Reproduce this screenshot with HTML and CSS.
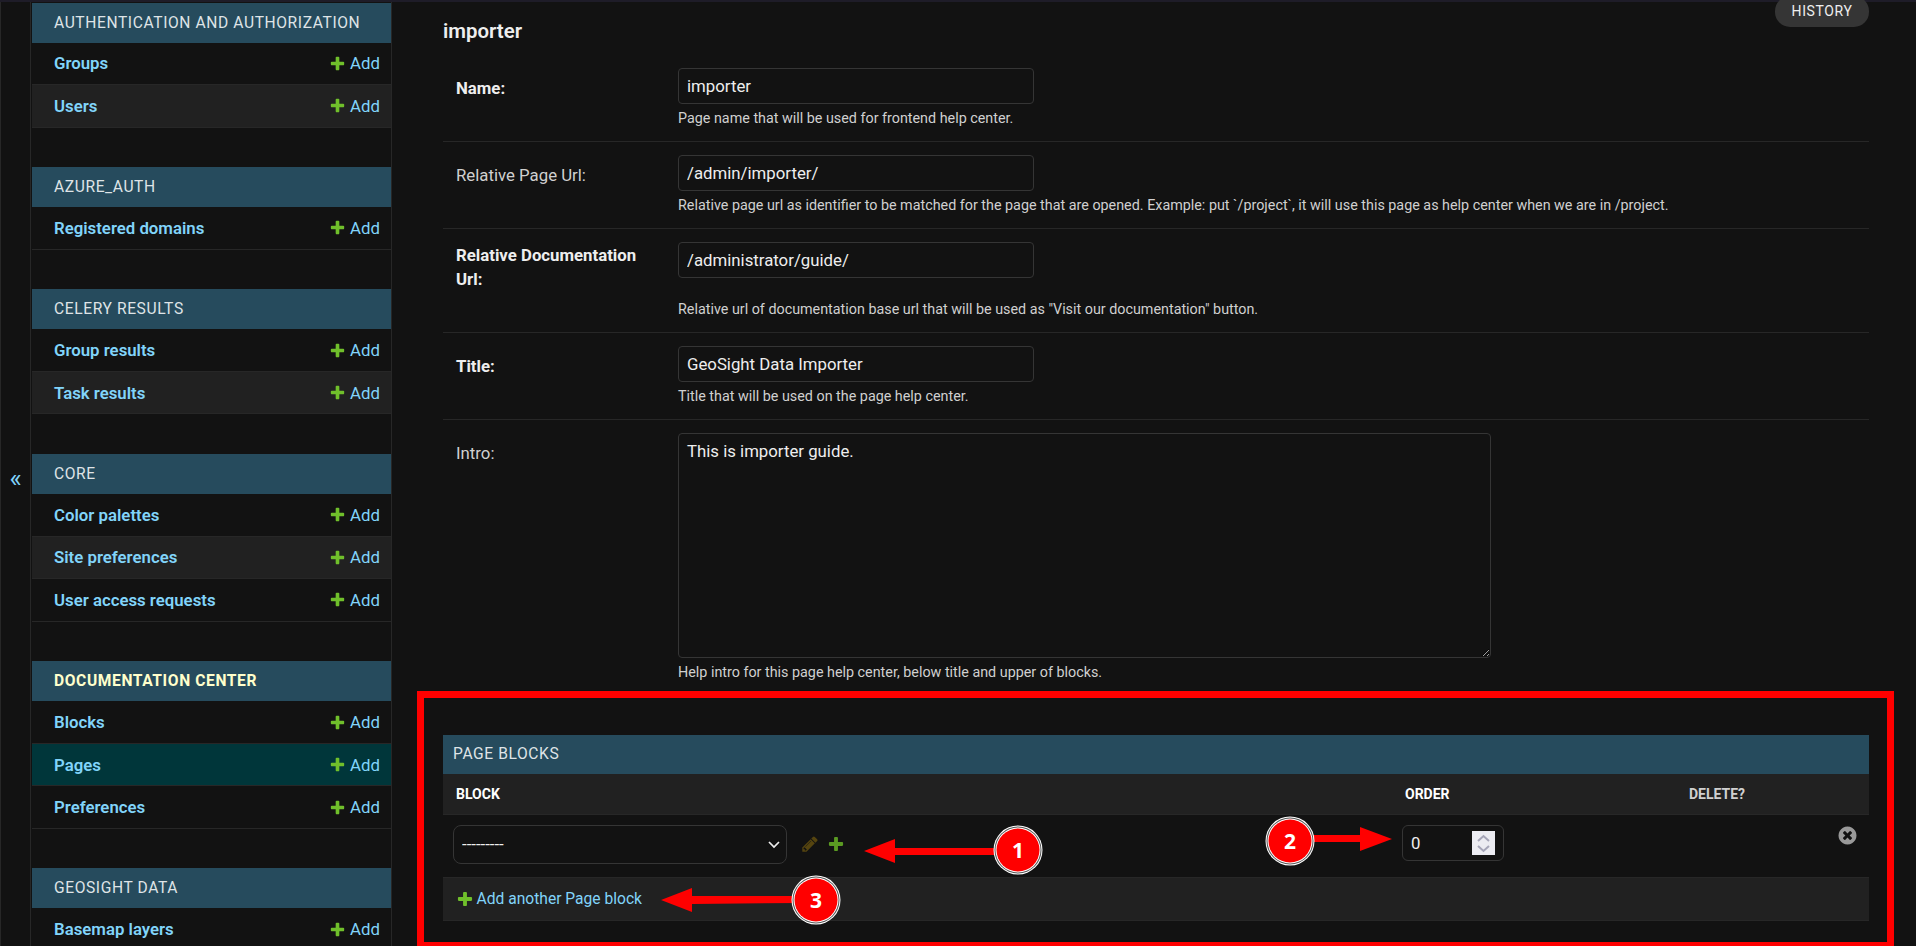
FILE: index.html
```html
<!DOCTYPE html>
<html lang="en">
<head>
  <meta charset="UTF-8">
  <meta name="viewport" content="width=device-width, initial-scale=1.0">
  <title>importer | Change page</title>
  <link rel="stylesheet" href="styles.css">
</head>
<body>

  <svg class="icon-defs" aria-hidden="true">
    <symbol id="icon-add" viewBox="0 0 1792 1792">
      <path d="M1600 796v192q0 40-28 68t-68 28h-416v416q0 40-28 68t-68 28h-192q-40 0-68-28t-28-68v-416h-416q-40 0-68-28t-28-68v-192q0-40 28-68t68-28h416v-416q0-40 28-68t68-28h192q40 0 68 28t28 68v416h416q40 0 68 28t28 68z"/>
    </symbol>
    <symbol id="icon-change" viewBox="0 0 1792 1792">
      <path d="M491 1536l91-91-235-235-91 91v107h128v128h107zm523-928q0-22-22-22-10 0-17 7l-542 542q-7 7-7 17 0 22 22 22 10 0 17-7l542-542q7-7 7-17zm-54-192l416 416-832 832h-416v-416zm683 96q0 53-37 90l-166 166-416-416 166-165q36-38 90-38 53 0 91 38l235 234q37 39 37 91z"/>
    </symbol>
    <symbol id="icon-delete" viewBox="0 0 1792 1792">
      <path d="M1277 1122q0-26-19-45l-181-181 181-181q19-19 19-45 0-27-19-46l-90-90q-19-19-46-19-26 0-45 19l-181 181-181-181q-19-19-45-19-27 0-46 19l-90 90q-19 19-19 46 0 26 19 45l181 181-181 181q-19 19-19 45 0 27 19 46l90 90q19 19 46 19 26 0 45-19l181-181 181 181q19 19 45 19 27 0 46-19l90-90q19-19 19-46zm387-226q0 209-103 385.5t-279.5 279.5-385.5 103-385.5-103-279.5-279.5-103-385.5 103-385.5 279.5-279.5 385.5-103 385.5 103 279.5 279.5 103 385.5z"/>
    </symbol>
  </svg>

  <div class="topline"></div>

  <div class="shell">
    <button class="nav-toggle" type="button">«</button>

    <nav class="sidebar">
      <div class="app-module">
        <div class="app-caption">Authentication and Authorization</div>
        <div class="model-row"><a class="model-link">Groups</a><a class="add-link"><svg class="icon-plus"><use href="#icon-add"/></svg>Add</a></div>
        <div class="model-row alt"><a class="model-link">Users</a><a class="add-link"><svg class="icon-plus"><use href="#icon-add"/></svg>Add</a></div>
      </div>
      <div class="app-module">
        <div class="app-caption">Azure_Auth</div>
        <div class="model-row"><a class="model-link">Registered domains</a><a class="add-link"><svg class="icon-plus"><use href="#icon-add"/></svg>Add</a></div>
      </div>
      <div class="app-module">
        <div class="app-caption">Celery Results</div>
        <div class="model-row"><a class="model-link">Group results</a><a class="add-link"><svg class="icon-plus"><use href="#icon-add"/></svg>Add</a></div>
        <div class="model-row alt"><a class="model-link">Task results</a><a class="add-link"><svg class="icon-plus"><use href="#icon-add"/></svg>Add</a></div>
      </div>
      <div class="app-module">
        <div class="app-caption">Core</div>
        <div class="model-row"><a class="model-link">Color palettes</a><a class="add-link"><svg class="icon-plus"><use href="#icon-add"/></svg>Add</a></div>
        <div class="model-row alt"><a class="model-link">Site preferences</a><a class="add-link"><svg class="icon-plus"><use href="#icon-add"/></svg>Add</a></div>
        <div class="model-row"><a class="model-link">User access requests</a><a class="add-link"><svg class="icon-plus"><use href="#icon-add"/></svg>Add</a></div>
      </div>
      <div class="app-module">
        <div class="app-caption current">Documentation Center</div>
        <div class="model-row"><a class="model-link">Blocks</a><a class="add-link"><svg class="icon-plus"><use href="#icon-add"/></svg>Add</a></div>
        <div class="model-row selected"><a class="model-link">Pages</a><a class="add-link"><svg class="icon-plus"><use href="#icon-add"/></svg>Add</a></div>
        <div class="model-row"><a class="model-link">Preferences</a><a class="add-link"><svg class="icon-plus"><use href="#icon-add"/></svg>Add</a></div>
      </div>
      <div class="app-module">
        <div class="app-caption">GeoSight Data</div>
        <div class="model-row"><a class="model-link">Basemap layers</a><a class="add-link"><svg class="icon-plus"><use href="#icon-add"/></svg>Add</a></div>
      </div>
    </nav>

    <main class="content">
      <div class="page-head">
        <h2 class="page-title">importer</h2>
        <a class="history-btn">History</a>
      </div>

      <div class="form-row">
        <label class="field-label required">Name:</label>
        <input class="text-input" type="text" value="importer">
        <div class="help">Page name that will be used for frontend help center.</div>
      </div>
      <div class="form-row">
        <label class="field-label">Relative Page Url:</label>
        <input class="text-input" type="text" value="/admin/importer/">
        <div class="help">Relative page url as identifier to be matched for the page that are opened. Example: put `/project`, it will use this page as help center when we are in /project.</div>
      </div>
      <div class="form-row">
        <label class="field-label required tall">Relative Documentation Url:</label>
        <input class="text-input" type="text" value="/administrator/guide/">
        <div class="help">Relative url of documentation base url that will be used as "Visit our documentation" button.</div>
      </div>
      <div class="form-row">
        <label class="field-label required">Title:</label>
        <input class="text-input" type="text" value="GeoSight Data Importer">
        <div class="help">Title that will be used on the page help center.</div>
      </div>
      <div class="form-row last">
        <label class="field-label">Intro:</label>
        <textarea class="text-area">This is importer guide.</textarea>
        <div class="help">Help intro for this page help center, below title and upper of blocks.</div>
      </div>

      <div class="inline-group">
        <div class="inline-caption">Page blocks</div>
        <table class="inline-table">
          <colgroup>
            <col class="col-block">
            <col class="col-order">
            <col>
          </colgroup>
          <thead>
            <tr>
              <th>Block</th>
              <th>Order</th>
              <th class="quiet">Delete?</th>
            </tr>
          </thead>
          <tbody>
            <tr>
              <td>
                <div class="block-cell">
                  <div class="select-wrap">
                    <select class="block-select"><option>---------</option></select>
                    <svg class="select-arrow" viewBox="0 0 12 8" width="12" height="8"><path d="M1 1l5 5 5-5" fill="none" stroke="#eeeeee" stroke-width="1.7"/></svg>
                  </div>
                  <svg class="icon-pencil"><use href="#icon-change"/></svg>
                  <svg class="icon-plus dim"><use href="#icon-add"/></svg>
                </div>
              </td>
              <td>
                <div class="number-input">
                  <input type="text" value="0">
                  <span class="spinner">
                    <svg viewBox="0 0 23 24" width="23" height="24"><path d="M6 10l5.500-5 5.500 5M6 15l5.500 5 5.500-5" fill="none" stroke="#a5a5b8" stroke-width="2"/></svg>
                  </span>
                </div>
              </td>
              <td class="delete-cell"><svg class="icon-delete"><use href="#icon-delete"/></svg></td>
            </tr>
          </tbody>
        </table>
        <div class="add-row"><svg class="icon-plus"><use href="#icon-add"/></svg><a>Add another Page block</a></div>
      </div>
    </main>
  </div>

  <!-- annotations drawn on top of the screenshot -->
  <svg class="annotations" viewBox="0 0 1916 946" width="1916" height="946">
    <rect x="420.5" y="694.5" width="1470" height="251" fill="none" stroke="#ff0000" stroke-width="7"/>

    <path d="M864 851L895 839V848L1000 848V855L895 855V863Z" fill="#ff0000"/>
    <path d="M1310 835H1360V827L1392 839L1360 851V842H1310Z" fill="#ff0000"/>
    <path d="M661 900L692 888V896L800 896V903L692 904V912Z" fill="#ff0000"/>

    <g class="badge">
      <circle cx="1018" cy="850" r="24.500" fill="#ffffff"/>
      <circle cx="1018" cy="850" r="23.500" fill="#555555"/>
      <circle cx="1018" cy="850" r="22.500" fill="#ffffff"/>
      <circle cx="1018" cy="850" r="21.500" fill="#ff0000"/>
      <text x="1018" y="858">1</text>
    </g>
    <g class="badge">
      <circle cx="1290" cy="841" r="24.500" fill="#ffffff"/>
      <circle cx="1290" cy="841" r="23.500" fill="#555555"/>
      <circle cx="1290" cy="841" r="22.500" fill="#ffffff"/>
      <circle cx="1290" cy="841" r="21.500" fill="#ff0000"/>
      <text x="1290" y="849">2</text>
    </g>
    <g class="badge">
      <circle cx="816" cy="900" r="24.500" fill="#ffffff"/>
      <circle cx="816" cy="900" r="23.500" fill="#555555"/>
      <circle cx="816" cy="900" r="22.500" fill="#ffffff"/>
      <circle cx="816" cy="900" r="21.500" fill="#ff0000"/>
      <text x="816" y="908">3</text>
    </g>
  </svg>

</body>
</html>
```

FILE: styles.css
```css
* {
  box-sizing: border-box;
}

html, body {
  height: 100%;
}

body {
  margin: 0;
  position: relative;
  overflow: hidden;
  background-color: #121212;
  color: #eeeeee;
  font-family: Roboto, "Liberation Sans", sans-serif;
  font-size: 16.8px;
  color-scheme: dark;
}

.icon-defs {
  display: none;
}

.topline {
  height: 2px;
  background-color: #1e1c28;
}

.shell {
  display: flex;
  height: calc(100% - 2px);
}

/* sidebar */
.nav-toggle {
  width: 31px;
  flex: none;
  padding: 8px 0 0;
  background-color: #121212;
  border: none;
  border-left: 1px solid #272727;
  border-right: 1px solid #272727;
  color: #81d4fa;
  font-family: Roboto, sans-serif;
  font-size: 26px;
}

.sidebar {
  width: 361px;
  flex: none;
  padding: 0.5px 0 0 1px;
  border-right: 1px solid #272727;
  overflow: hidden;
}

.app-module {
  margin-bottom: 39.700px;
}

.app-caption {
  height: 40px;
  padding-left: 22px;
  line-height: 40px;
  background-color: #264b5d;
  color: #dfe4e7;
  font-size: 15.6px;
  letter-spacing: 0.6px;
  text-transform: uppercase;
}

.app-caption.current {
  color: #ffffcc;
  font-weight: 700;
}

.model-row {
  display: flex;
  align-items: center;
  justify-content: space-between;
  height: 42.500px;
  padding: 0 11px 0 22px;
  border-bottom: 1px solid #272727;
}

.model-row.alt {
  background-color: #212121;
}

.model-row.selected {
  background-color: #00363a;
}

.model-link {
  color: #81d4fa;
  font-weight: 600;
}

.add-link {
  display: flex;
  align-items: center;
  gap: 4px;
  color: #81d4fa;
}

.icon-plus {
  width: 17px;
  height: 17px;
  fill: #70bf2b;
}

.icon-plus.dim {
  width: 18px;
  height: 18px;
  fill: #5a9a22;
}

/* change form */
.content {
  flex: 1;
  min-width: 0;
  padding: 0 47px 0 51px;
}

.page-head {
  display: flex;
  justify-content: space-between;
  align-items: flex-start;
  height: 53px;
}

.page-title {
  margin: 17px 0 0;
  font-size: 20.4px;
  font-weight: 600;
  line-height: 24px;
  color: #eeeeee;
}

.history-btn {
  width: 94px;
  height: 31px;
  margin-top: -6px;
  padding-top: 3px;
  border-radius: 15px;
  background-color: #353535;
  color: #eeeeee;
  font-size: 14px;
  letter-spacing: 0.6px;
  line-height: 24px;
  text-align: center;
  text-transform: uppercase;
}

.form-row {
  display: grid;
  grid-template-columns: 222px 1fr;
  padding: 13px 0 15px 13px;
  border-bottom: 1px solid #272727;
}

.form-row.last {
  border-bottom: none;
}

.field-label {
  padding: 8px 30px 0 0;
  line-height: 24px;
  color: #d0d0d0;
}

.field-label.required {
  color: #eeeeee;
  font-weight: 700;
}

.field-label.tall {
  padding: 1px 30px 4px 0;
}

.text-input {
  width: 356px;
  height: 36px;
  padding: 0 8px;
  background-color: #121212;
  border: 1px solid #353535;
  border-radius: 4px;
  color: #eeeeee;
  font-family: inherit;
  font-size: 16.8px;
}

.text-area {
  display: block;
  width: 813px;
  height: 225px;
  padding: 5px 8px;
  background-color: #121212;
  border: 1px solid #353535;
  border-radius: 4px;
  color: #eeeeee;
  font-family: inherit;
  font-size: 16.8px;
  line-height: 24px;
}

.help {
  grid-column: 2;
  margin-top: 6px;
  color: #d0d0d0;
  font-size: 14.33px;
  line-height: 16px;
}

/* inline group */
.inline-group {
  margin-top: 40px;
}

.inline-caption {
  height: 39px;
  padding-left: 10px;
  line-height: 38px;
  background-color: #264b5d;
  color: #dfe4e7;
  font-size: 15.6px;
  letter-spacing: 0.6px;
  text-transform: uppercase;
}

.inline-table {
  width: 100%;
  border-collapse: collapse;
  table-layout: fixed;
}

.col-block {
  width: 949px;
}

.col-order {
  width: 284px;
}

.inline-table th {
  height: 40px;
  padding: 0 13px;
  background-color: #212121;
  border-bottom: 1px solid #272727;
  color: #ffffff;
  font-size: 14px;
  font-weight: 700;
  text-align: left;
  text-transform: uppercase;
}

.inline-table th.quiet {
  color: #d0d0d0;
}

.inline-table td {
  height: 63px;
  padding: 10px 10px 0;
  vertical-align: top;
}

.block-cell {
  display: flex;
  align-items: center;
  height: 39px;
}

.select-wrap {
  position: relative;
  margin-right: 14px;
}

.block-select {
  display: block;
  width: 334px;
  height: 39px;
  padding: 0 8px;
  background-color: #121212;
  border: 1px solid #353535;
  border-radius: 8px;
  color: #eeeeee;
  font-family: inherit;
  font-size: 16.8px;
  appearance: none;
}

.select-arrow {
  position: absolute;
  top: 16px;
  right: 7px;
}

.icon-pencil {
  width: 18px;
  height: 18px;
  margin-right: 8px;
  fill: #efb80b;
  opacity: 0.3;
}

.number-input {
  display: flex;
  align-items: center;
  justify-content: space-between;
  width: 102px;
  height: 36px;
  padding: 0 8px;
  border: 1px solid #353535;
  border-radius: 6px;
}

.number-input input {
  width: 40px;
  padding: 0;
  background: none;
  border: none;
  color: #eeeeee;
  font-family: inherit;
  font-size: 16.8px;
}

.spinner {
  display: flex;
  width: 23px;
  height: 24px;
  background-color: #ececf2;
}

.inline-table td.delete-cell {
  padding: 10px 11px 0 0;
  text-align: right;
}

.icon-delete {
  width: 21px;
  height: 21px;
  fill: #999999;
}

.add-row {
  display: flex;
  align-items: center;
  gap: 3px;
  height: 44px;
  padding: 0 0 0 12.600px;
  background-color: #212121;
  border-top: 1px solid #272727;
  border-bottom: 1px solid #272727;
  color: #81d4fa;
  font-size: 15.6px;
}

.add-row .icon-plus {
  width: 18px;
  height: 18px;
}

/* annotations */
.annotations {
  position: absolute;
  top: 0;
  left: 0;
  pointer-events: none;
}

.badge text {
  fill: #ffffff;
  font-family: "Open Sans", sans-serif;
  font-size: 21px;
  font-weight: 700;
  text-anchor: middle;
}
```
